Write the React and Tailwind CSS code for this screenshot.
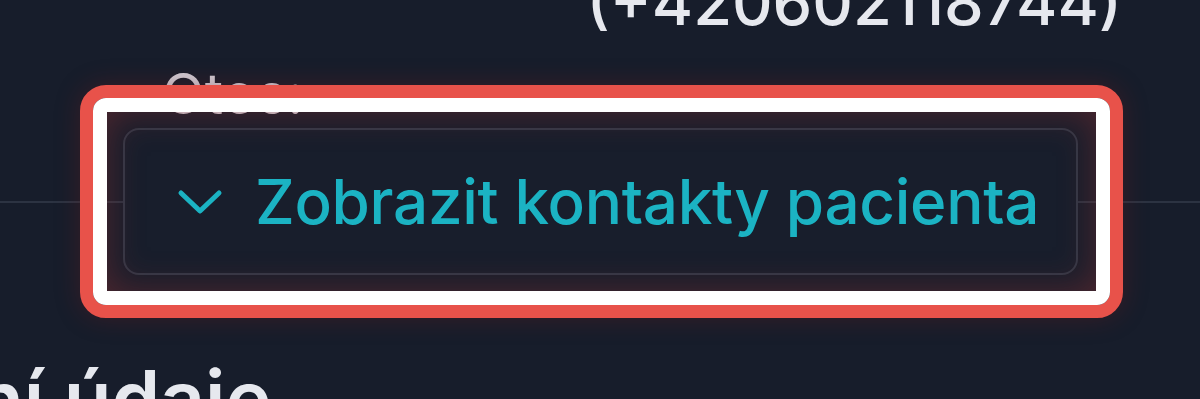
import React from "react";

function Chevron() {
  return (
    <svg width="46" height="28" viewBox="0 0 46 28" fill="none" className="shrink-0">
      <path d="M4 5 L23 23 L42 5" stroke="#1bb3c3" strokeWidth="5" strokeLinecap="round" strokeLinejoin="round" />
    </svg>
  );
}

export default function App() {
  return (
    <div
      className="relative flex flex-col w-[1200px] h-[399px] overflow-hidden bg-[#171d2b]"
      style={{ fontFamily: "Inter, 'Noto Sans', sans-serif" }}
    >
      <div className="flex justify-end pr-[78px] -mt-[30px] h-[64px] shrink-0">
        <span className="text-[63px] leading-[64px] font-medium text-[#e6e8ee] whitespace-nowrap">
          (+420602118744)
        </span>
      </div>

      <div className="pl-[162px] mt-[32px] h-[56px] shrink-0">
        <span className="text-[56px] leading-[56px] text-[#cfcdd6]">Otec:</span>
      </div>

      <div className="flex items-center mt-[6px] shrink-0">
        <div className="w-[123px] h-[2px] bg-[#2c3342]" />
        <button className="flex items-center gap-[32px] w-[955px] h-[147px] pl-[52px] rounded-[16px] border-2 border-[#313847] bg-[#181e2c]">
          <Chevron />
          <span className="text-[62px] font-medium text-[#1bb3c3] tracking-[-0.3px] whitespace-nowrap">
            Zobrazit kontakty pacienta
          </span>
        </button>
        <div className="flex-1 h-[2px] bg-[#2c3342]" />
      </div>

      <div className="mt-[85px] -ml-[24px] h-[78px] shrink-0">
        <span className="text-[78px] leading-[78px] font-semibold text-[#e6e8ee] whitespace-nowrap">
          ní údaje
        </span>
      </div>

      <div className="absolute left-[80px] top-[85px] w-[1043px] h-[233px] rounded-[26px] border-[13px] border-[#e8524a] shadow-[0_0_24px_rgba(120,30,30,0.35)]">
        <div className="w-full h-full rounded-[13px] border-[14px] border-white shadow-[inset_0_0_36px_rgba(150,50,50,0.45)]" />
      </div>
    </div>
  );
}
